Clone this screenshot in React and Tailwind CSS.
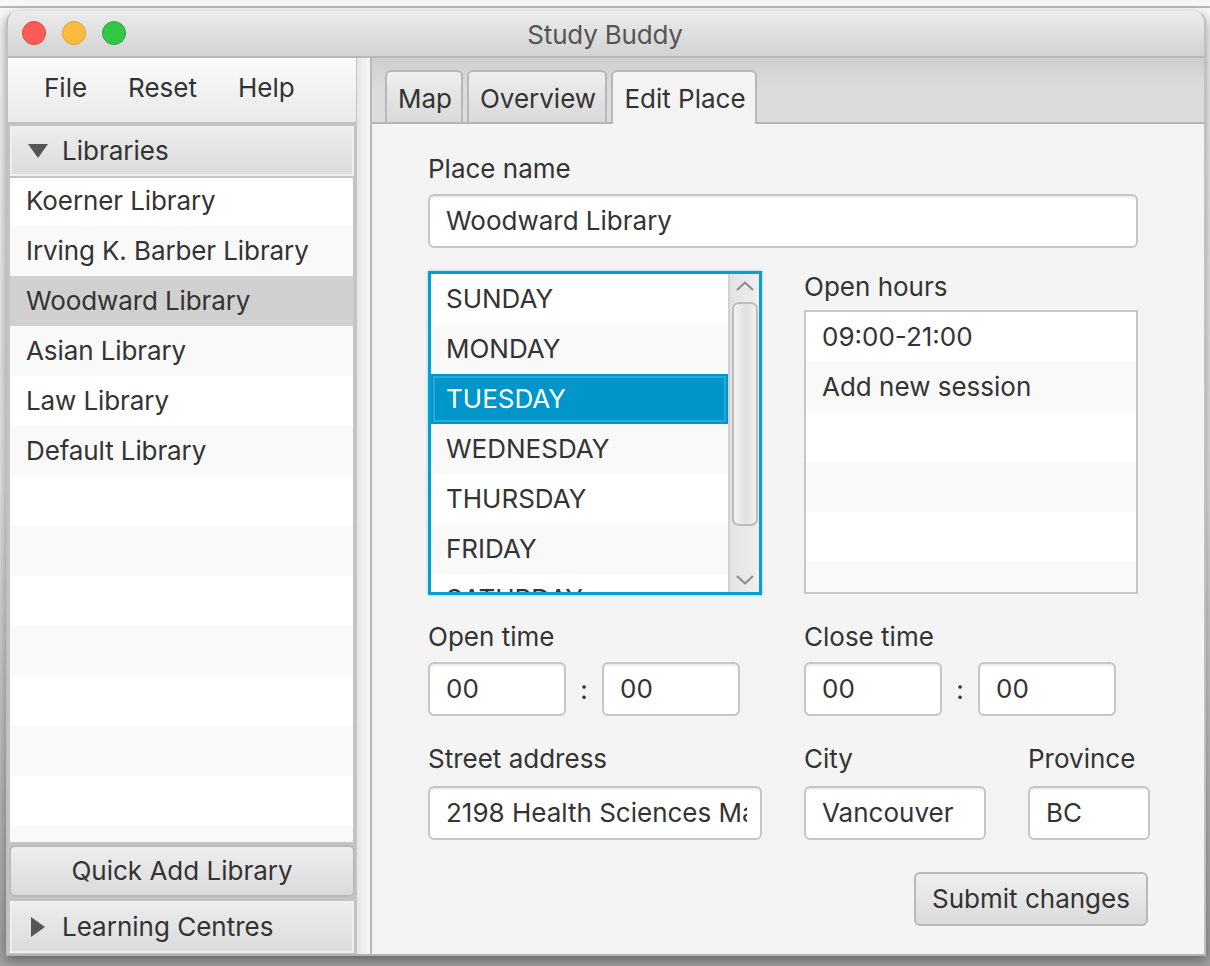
const font = { fontFamily: 'Inter, "Noto Sans", sans-serif' };

function Field({ width, children, className = "" }) {
  return (
    <div className={`h-[54px] rounded-[6px] border-2 border-[#c6c6c6] bg-white pl-[16px] pr-[13px] pb-[2px] flex items-center shrink-0 shadow-[inset_0_3px_3px_-2px_rgba(0,0,0,0.12)] ${width} ${className}`}>
      <div className="overflow-hidden whitespace-nowrap w-full">{children}</div>
    </div>
  );
}

function Label({ children, className = "" }) {
  return <div className={`h-[34px] leading-[34px] ${className}`}>{children}</div>;
}

function Row({ children, tone, pad = "pl-[16px]", className = "" }) {
  return (
    <div className={`h-[50px] leading-[50px] shrink-0 whitespace-nowrap ${pad} ${tone} ${className}`}>{children}</div>
  );
}

function AccordionHeader({ children, icon, height }) {
  return (
    <div className={`bg-[#c4c4c4] px-[2px] py-[2px] ${height}`}>
      <div className="h-full border-2 border-[#f0f0f0] bg-gradient-to-b from-[#ececec] to-[#dcdcdc] flex items-center pb-[2px]">
        <div className="w-[50px] flex justify-center shrink-0 pt-[2px]">{icon}</div>
        <span>{children}</span>
      </div>
    </div>
  );
}

export default function App() {
  const libraries = ["Koerner Library", "Irving K. Barber Library", "Woodward Library", "Asian Library", "Law Library", "Default Library"];
  const sideRows = Array.from({ length: 14 }, (_, i) => i);
  const days = ["SUNDAY", "MONDAY", "TUESDAY", "WEDNESDAY", "THURSDAY", "FRIDAY", "SATURDAY"];
  const hours = ["09:00-21:00", "Add new session", "", "", "", ""];

  return (
    <div style={font} className="w-[1210px] h-[966px] overflow-hidden bg-[#8f8f8f] text-[26px] text-[#333333]">
      <div className="h-[11px] bg-[#f7f7f7] pt-[6px]">
        <div className="h-[2px] bg-[#b9b9b9]"></div>
      </div>
      <div className="flex h-[955px] bg-gradient-to-b from-[#f7f7f7] via-[#e6e6e6] to-[#a0a0a0]">
        <div className="w-[6px] shrink-0"></div>
        <div className="w-[1200px] h-[945px] shrink-0 rounded-t-[12px] border-x-2 border-[#c0c0c0] border-b-2 border-b-[#b4b4b4] bg-[#f4f4f4] flex flex-col overflow-hidden shadow-[0_4px_12px_rgba(0,0,0,0.4)]">
          <div className="h-[47px] shrink-0 bg-gradient-to-b from-[#ececec] to-[#d2d2d2] border-b-2 border-[#b8b8b8] flex items-center relative">
            <div className="flex gap-[16px] pl-[14px] -mt-[2px]">
              <div className="w-[24px] h-[24px] rounded-full bg-[#fc5b57] border border-[#e2463f]"></div>
              <div className="w-[24px] h-[24px] rounded-full bg-[#fdbc40] border border-[#e09e2e]"></div>
              <div className="w-[24px] h-[24px] rounded-full bg-[#33c748] border border-[#27a937]"></div>
            </div>
            <div className="absolute inset-0 flex items-center justify-center text-[#555555] pr-[2px] pt-[2px] tracking-[-0.2px]">Study Buddy</div>
          </div>

          <div className="flex flex-1 min-h-0">
            {/* Sidebar */}
            <div className="w-[349px] shrink-0 flex flex-col bg-[#c4c4c4] pr-[1px]">
              <div className="h-[66px] shrink-0 bg-gradient-to-b from-[#fbfbfb] to-[#e9e9e9] border-b-2 border-[#c2c2c2] flex items-center gap-[41px] pl-[36px] pb-[6px]">
                <span>File</span>
                <span>Reset</span>
                <span>Help</span>
              </div>
              <AccordionHeader
                height="h-[54px] shrink-0"
                icon={
                  <svg width="20" height="14" viewBox="0 0 20 14" className="ml-[2px]">
                    <path d="M0 0H20L10 14Z" fill="#555555" />
                  </svg>
                }
              >
                Libraries
              </AccordionHeader>
              <div className="h-[664px] shrink-0 mx-[2px] mr-[3px] overflow-hidden bg-white tracking-[-0.1px]">
                <div className="mt-[-2px]">
                  {sideRows.map((i) => {
                    const selected = i === 2;
                    return (
                      <Row key={i} tone={selected ? "bg-[#d0d0d0]" : i % 2 ? "bg-[#f9f9f9]" : "bg-white"}>
                        {libraries[i] || ""}
                      </Row>
                    );
                  })}
                </div>
              </div>
              <div className="h-[3px] shrink-0"></div>
              <div className="h-[52px] shrink-0 mx-[1px] rounded-[6px] border-2 border-[#b9b9b9] bg-gradient-to-b from-[#eeeeee] to-[#dadada] flex items-center justify-center pb-[2px]">
                Quick Add Library
              </div>
              <div className="h-[2px] shrink-0"></div>
              <AccordionHeader
                height="h-[56px] shrink-0"
                icon={
                  <svg width="14" height="20" viewBox="0 0 14 20" className="ml-[2px]">
                    <path d="M0 0L14 10L0 20Z" fill="#555555" />
                  </svg>
                }
              >
                Learning Centres
              </AccordionHeader>
            </div>

            {/* Splitter */}
            <div className="w-[15px] shrink-0 bg-gradient-to-r from-[#e6e6e6] to-[#f7f7f7] border-r-2 border-[#b8b8b8]"></div>

            {/* Tab panel */}
            <div className="flex-1 min-w-0 flex flex-col">
              <div className="h-[66px] shrink-0 bg-gradient-to-b from-[#cfcfcf] via-[#dcdcdc] to-[#dcdcdc] border-b-2 border-[#b4b4b4] flex items-end gap-[4px] pl-[13px]">
                <div className="w-[78px] h-[52px] rounded-t-[6px] border-2 border-b-0 border-[#b8b8b8] bg-gradient-to-b from-[#efefef] to-[#d9d9d9] flex items-center justify-center pl-[2px] pt-[3px]">Map</div>
                <div className="w-[140px] h-[52px] rounded-t-[6px] border-2 border-b-0 border-[#b8b8b8] bg-gradient-to-b from-[#efefef] to-[#d9d9d9] flex items-center justify-center pl-[2px] pt-[3px]">Overview</div>
                <div className="w-[146px] h-[54px] -mb-[2px] rounded-t-[6px] border-2 border-b-0 border-[#b8b8b8] bg-[#f4f4f4] flex items-center justify-center pl-[2px] pt-[1px]">Edit Place</div>
              </div>

              <div className="flex-1 min-h-0 pl-[56px] pt-[28px] flex flex-col">
                <Label>Place name</Label>
                <div className="h-[8px] shrink-0"></div>
                <Field width="w-[710px]">Woodward Library</Field>

                <div className="flex mt-[23px] h-[324px] shrink-0">
                  <div className="w-[334px] h-[324px] shrink-0 border-[3px] border-[#039ed3] shadow-[0_0_3px_rgba(3,158,211,0.4)] flex overflow-hidden bg-white">
                    <div className="w-[297px] shrink-0 overflow-hidden">
                      {days.map((d, i) =>
                        i === 2 ? (
                          <div key={d} className="h-[50px] bg-[#0096c9] border-2 border-[#0096c9] text-white">
                            <div className="h-full border-2 border-[#2ba9d6] pl-[11px] leading-[42px]">{d}</div>
                          </div>
                        ) : (
                          <Row key={d} pad="pl-[15px]" tone={i % 2 ? "bg-[#f9f9f9]" : "bg-white"}>{d}</Row>
                        )
                      )}
                    </div>
                    <div className="flex-1 border-l-2 border-[#d2d2d2] bg-gradient-to-r from-[#e2e2e2] to-[#efefef] flex flex-col items-center relative">
                      <svg width="18" height="10" viewBox="0 0 18 10" className="mt-[7px] shrink-0">
                        <path d="M1 9L9 1.5L17 9" fill="none" stroke="#8a8a8a" strokeWidth="2" />
                      </svg>
                      <div className="w-[26px] h-[224px] mt-[11px] rounded-[7px] border-2 border-[#bdbdbd] bg-gradient-to-r from-[#f4f4f4] via-[#e0e0e0] to-[#f0f0f0] shrink-0"></div>
                      <svg width="18" height="10" viewBox="0 0 18 10" className="mt-[49px] shrink-0">
                        <path d="M1 1L9 8.5L17 1" fill="none" stroke="#8a8a8a" strokeWidth="2" />
                      </svg>
                    </div>
                  </div>

                  <div className="w-[334px] ml-[42px] shrink-0">
                    <Label className="-mt-[1px]">Open hours</Label>
                    <div className="h-[284px] border-2 border-[#c6c6c6] overflow-hidden bg-white mt-[6px]">
                      {hours.map((h, i) => (
                        <Row key={i} tone={i % 2 ? "bg-[#f9f9f9]" : "bg-white"}>{h}</Row>
                      ))}
                    </div>
                  </div>
                </div>

                <div className="flex mt-[25px] shrink-0">
                  <div className="w-[376px] shrink-0">
                    <Label>Open time</Label>
                    <div className="flex items-center mt-[8px]">
                      <Field width="w-[138px]">00</Field>
                      <div className="w-[36px] text-center">:</div>
                      <Field width="w-[138px]">00</Field>
                    </div>
                  </div>
                  <div className="shrink-0">
                    <Label>Close time</Label>
                    <div className="flex items-center mt-[8px]">
                      <Field width="w-[138px]">00</Field>
                      <div className="w-[36px] text-center">:</div>
                      <Field width="w-[138px]">00</Field>
                    </div>
                  </div>
                </div>

                <div className="flex mt-[26px] shrink-0">
                  <div className="w-[376px] shrink-0">
                    <Label>Street address</Label>
                    <Field width="w-[334px]" className="mt-[10px]">2198 Health Sciences Mall</Field>
                  </div>
                  <div className="w-[224px] shrink-0">
                    <Label>City</Label>
                    <Field width="w-[182px]" className="mt-[10px]">Vancouver</Field>
                  </div>
                  <div className="shrink-0">
                    <Label>Province</Label>
                    <Field width="w-[122px]" className="mt-[10px]">BC</Field>
                  </div>
                </div>

                <div className="pl-[486px] mt-[32px] shrink-0">
                  <div className="w-[234px] h-[54px] rounded-[6px] border-2 border-[#b9b9b9] bg-gradient-to-b from-[#efefef] to-[#dbdbdb] flex items-center justify-center pb-[2px]">
                    Submit changes
                  </div>
                </div>
              </div>
            </div>
          </div>
        </div>
      </div>
    </div>
  );
}
